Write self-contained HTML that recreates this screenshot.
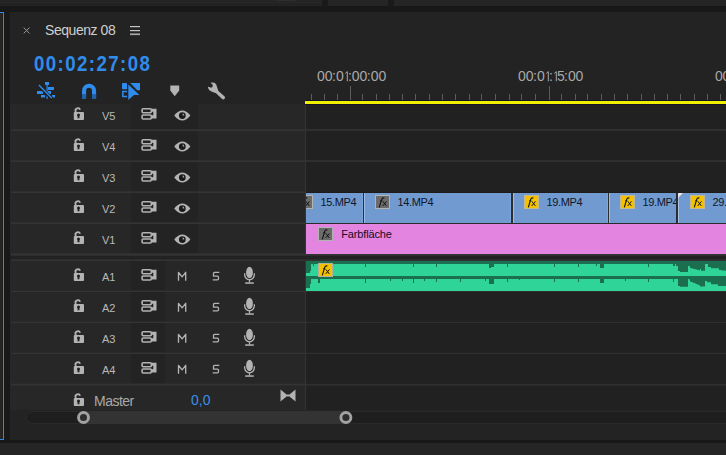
<!DOCTYPE html><html><head><meta charset="utf-8"><style>
html,body{margin:0;padding:0;}
body{width:726px;height:455px;overflow:hidden;position:relative;background:#242424;font-family:"Liberation Sans", sans-serif;}
.r{position:absolute;}
.t{position:absolute;white-space:nowrap;line-height:1;}
svg{position:absolute;overflow:visible;}
</style></head><body>
<div class="r" style="left:0px;top:0px;width:726px;height:6px;background:#1a1a1a;"></div>
<div class="r" style="left:0px;top:0px;width:322px;height:6px;background:#252525;"></div>
<div class="r" style="left:0px;top:4px;width:321px;height:1px;background:#202020;"></div>
<div class="r" style="left:278px;top:0px;width:17px;height:1px;background:#2e2e2e;"></div>
<div class="r" style="left:328px;top:0px;width:60px;height:6px;background:#252525;"></div>
<div class="r" style="left:394px;top:0px;width:332px;height:6px;background:#252525;"></div>
<div class="r" style="left:0px;top:6px;width:726px;height:6px;background:#181818;"></div>
<div class="r" style="left:0px;top:12px;width:10px;height:428px;background:#191919;"></div>
<div class="r" style="left:0px;top:13px;width:2px;height:426px;background:#262626;"></div>
<div class="r" style="left:2px;top:13px;width:1px;height:426px;background:#221e1a;"></div>
<div class="r" style="left:3px;top:12px;width:1px;height:428px;background:#2d8ceb;"></div>
<div class="r" style="left:0px;top:12px;width:4px;height:1px;background:#2d8ceb;"></div>
<div class="r" style="left:0px;top:439px;width:4px;height:1px;background:#2d8ceb;"></div>
<div class="r" style="left:10px;top:12px;width:716px;height:428px;background:#232323;"></div>
<div class="r" style="left:0px;top:440px;width:726px;height:3px;background:#181818;"></div>
<div class="r" style="left:0px;top:443px;width:726px;height:12px;background:#252525;"></div>
<svg style="left:23px;top:27px" width="8" height="7" viewBox="0 0 8 7"><path d="M0.7 0.6L6.5 6.4M6.5 0.6L0.7 6.4" stroke="#9a9a9a" stroke-width="1"/></svg>
<div class="t" style="left:45px;top:23px;font-size:14px;color:#cfcfcf;letter-spacing:-0.45px;">Sequenz 08</div>
<svg style="left:130px;top:24px" width="10" height="12" viewBox="0 0 10 12"><rect x="0" y="2" width="10" height="1.2" fill="#c4c4c4"/><rect x="0" y="6" width="10" height="1.2" fill="#c4c4c4"/><rect x="0" y="9.4" width="10" height="1.7" fill="#a8a8a8"/></svg>
<div class="t" style="left:34px;top:53.5px;font-size:21.5px;color:#2f8cec;font-weight:bold;letter-spacing:1.6px;transform:scaleX(0.87);transform-origin:0 0;">00:02:27:08</div>
<svg style="left:36px;top:81px" width="20" height="19" viewBox="0 0 20 19">
<rect x="9" y="1" width="4" height="3" fill="#2f8cec"/>
<rect x="10.5" y="4" width="1.2" height="14" fill="#2f8cec"/>
<rect x="12" y="6" width="6" height="3" fill="#2f8cec"/>
<rect x="1" y="10" width="6" height="3" fill="#2f8cec"/>
<rect x="12" y="10" width="3" height="3" fill="#2f8cec"/>
<rect x="5" y="14" width="4" height="2.5" fill="#2f8cec"/>
<rect x="16" y="14" width="3" height="2.5" fill="#2f8cec"/>
<path d="M2.5 4.5L16 17.5" stroke="#232323" stroke-width="3.2"/>
<path d="M2.9 4.1L15.7 17" stroke="#2f8cec" stroke-width="1.4"/>
</svg>
<svg style="left:82px;top:83px" width="15" height="16" viewBox="0 0 15 16">
<path d="M2.05 15.6V7.7A5 5 0 0 1 12.05 7.7V15.6" fill="none" stroke="#2f8cec" stroke-width="4.1"/>
<rect x="0" y="11.1" width="4.1" height="4.5" fill="#1e64ab"/>
<rect x="10" y="11.1" width="4.1" height="4.5" fill="#1e64ab"/>
</svg>
<svg style="left:121px;top:82px" width="21" height="19" viewBox="0 0 21 19">
<rect x="1" y="1" width="5" height="6.3" rx="0.8" fill="#2f8cec"/>
<path d="M6 9.6H1.8V14.4H6" fill="none" stroke="#2f8cec" stroke-width="1.5"/>
<path d="M9.3 1H19V8.2H16.2Z" fill="#2f8cec"/>
<path d="M7.3 2.6L18.4 12.9L13 13 7.3 18Z" fill="#2f8cec"/>
</svg>
<svg style="left:170px;top:85px" width="10" height="12" viewBox="0 0 10 12">
<path d="M0.3 0.6H9.2V5.5L4.75 11.2L0.3 5.5Z" fill="#b3b3b3"/>
</svg>
<svg style="left:204px;top:79px" width="24" height="24" viewBox="0 0 24 24">
<path d="M6.6 3.5L10.6 3.7Q12.6 4.9 13.2 8.4L14.4 11.9L20.7 17.6Q21.5 18.9 20.4 20.1Q19.2 21 18.1 20.1L12.1 14.3L7.4 12.6Q4.6 11.6 3.9 8.4Q4.3 7.7 5.1 7.9L7.2 8.8Q8.6 8.3 8.8 7.1L8.5 5.6Q7.4 5 6.6 3.5Z" fill="#b3b3b3"/>
</svg>
<div class="t" style="left:317.0px;top:68.8px;font-size:14px;color:#a9a9a9;">0</div>
<div class="t" style="left:324.7px;top:68.8px;font-size:14px;color:#a9a9a9;">0</div>
<div class="t" style="left:332.0px;top:68.8px;font-size:14px;color:#a9a9a9;">:</div>
<div class="t" style="left:336.0px;top:68.8px;font-size:14px;color:#a9a9a9;">0</div>
<svg style="left:345.1px;top:70.8px" width="4" height="11" viewBox="0 0 4 11"><path d="M2.3 10.3V0.6L0.3 2.4" fill="none" stroke="#a8a8a8" stroke-width="1.0"/></svg>
<div class="t" style="left:348.0px;top:68.8px;font-size:14px;color:#a9a9a9;">:</div>
<div class="t" style="left:351.7px;top:68.8px;font-size:14px;color:#a9a9a9;">0</div>
<div class="t" style="left:359.4px;top:68.8px;font-size:14px;color:#a9a9a9;">0</div>
<div class="t" style="left:366.7px;top:68.8px;font-size:14px;color:#a9a9a9;">:</div>
<div class="t" style="left:370.7px;top:68.8px;font-size:14px;color:#a9a9a9;">0</div>
<div class="t" style="left:378.4px;top:68.8px;font-size:14px;color:#a9a9a9;">0</div>
<div class="t" style="left:518.1px;top:68.8px;font-size:14px;color:#a9a9a9;">0</div>
<div class="t" style="left:525.8px;top:68.8px;font-size:14px;color:#a9a9a9;">0</div>
<div class="t" style="left:533.1px;top:68.8px;font-size:14px;color:#a9a9a9;">:</div>
<div class="t" style="left:537.1px;top:68.8px;font-size:14px;color:#a9a9a9;">0</div>
<svg style="left:546.2px;top:70.8px" width="4" height="11" viewBox="0 0 4 11"><path d="M2.3 10.3V0.6L0.3 2.4" fill="none" stroke="#a8a8a8" stroke-width="1.0"/></svg>
<div class="t" style="left:549.1px;top:68.8px;font-size:14px;color:#a9a9a9;">:</div>
<svg style="left:553.7px;top:70.8px" width="4" height="11" viewBox="0 0 4 11"><path d="M2.3 10.3V0.6L0.3 2.4" fill="none" stroke="#a8a8a8" stroke-width="1.0"/></svg>
<div class="t" style="left:557.1px;top:68.8px;font-size:14px;color:#a9a9a9;">5</div>
<div class="t" style="left:563.9px;top:68.8px;font-size:14px;color:#a9a9a9;">:</div>
<div class="t" style="left:567.9px;top:68.8px;font-size:14px;color:#a9a9a9;">0</div>
<div class="t" style="left:575.6px;top:68.8px;font-size:14px;color:#a9a9a9;">0</div>
<div class="t" style="left:714.9px;top:68.8px;font-size:14px;color:#a9a9a9;">0</div>
<div class="t" style="left:722.6px;top:68.8px;font-size:14px;color:#a9a9a9;">0</div>
<div class="r" style="left:311px;top:94px;width:1px;height:6px;background:#5c5c5c;"></div>
<div class="r" style="left:324px;top:94px;width:1px;height:6px;background:#5c5c5c;"></div>
<div class="r" style="left:337px;top:94px;width:1px;height:6px;background:#5c5c5c;"></div>
<div class="r" style="left:350px;top:86px;width:1px;height:14px;background:#5c5c5c;"></div>
<div class="r" style="left:362px;top:94px;width:1px;height:6px;background:#5c5c5c;"></div>
<div class="r" style="left:376px;top:94px;width:1px;height:6px;background:#5c5c5c;"></div>
<div class="r" style="left:389px;top:94px;width:1px;height:6px;background:#5c5c5c;"></div>
<div class="r" style="left:402px;top:94px;width:1px;height:6px;background:#5c5c5c;"></div>
<div class="r" style="left:415px;top:94px;width:1px;height:6px;background:#5c5c5c;"></div>
<div class="r" style="left:429px;top:94px;width:1px;height:6px;background:#5c5c5c;"></div>
<div class="r" style="left:442px;top:94px;width:1px;height:6px;background:#5c5c5c;"></div>
<div class="r" style="left:455px;top:94px;width:1px;height:6px;background:#5c5c5c;"></div>
<div class="r" style="left:469px;top:94px;width:1px;height:6px;background:#5c5c5c;"></div>
<div class="r" style="left:481px;top:94px;width:1px;height:6px;background:#5c5c5c;"></div>
<div class="r" style="left:495px;top:94px;width:1px;height:6px;background:#5c5c5c;"></div>
<div class="r" style="left:509px;top:94px;width:1px;height:6px;background:#5c5c5c;"></div>
<div class="r" style="left:521px;top:94px;width:1px;height:6px;background:#5c5c5c;"></div>
<div class="r" style="left:535px;top:94px;width:1px;height:6px;background:#5c5c5c;"></div>
<div class="r" style="left:549px;top:86px;width:1px;height:14px;background:#5c5c5c;"></div>
<div class="r" style="left:561px;top:94px;width:1px;height:6px;background:#5c5c5c;"></div>
<div class="r" style="left:575px;top:94px;width:1px;height:6px;background:#5c5c5c;"></div>
<div class="r" style="left:587px;top:94px;width:1px;height:6px;background:#5c5c5c;"></div>
<div class="r" style="left:601px;top:94px;width:1px;height:6px;background:#5c5c5c;"></div>
<div class="r" style="left:614px;top:94px;width:1px;height:6px;background:#5c5c5c;"></div>
<div class="r" style="left:627px;top:94px;width:1px;height:6px;background:#5c5c5c;"></div>
<div class="r" style="left:641px;top:94px;width:1px;height:6px;background:#5c5c5c;"></div>
<div class="r" style="left:654px;top:94px;width:1px;height:6px;background:#5c5c5c;"></div>
<div class="r" style="left:667px;top:94px;width:1px;height:6px;background:#5c5c5c;"></div>
<div class="r" style="left:680px;top:94px;width:1px;height:6px;background:#5c5c5c;"></div>
<div class="r" style="left:694px;top:94px;width:1px;height:6px;background:#5c5c5c;"></div>
<div class="r" style="left:707px;top:94px;width:1px;height:6px;background:#5c5c5c;"></div>
<div class="r" style="left:720px;top:94px;width:1px;height:6px;background:#5c5c5c;"></div>
<div class="r" style="left:305px;top:100px;width:421px;height:5px;background:#15152a;"></div>
<div class="r" style="left:305px;top:101px;width:421px;height:3px;background:#f0ef00;"></div>
<div class="r" style="left:306px;top:105px;width:420px;height:305px;background:#212121;"></div>
<div class="r" style="left:305px;top:105px;width:1px;height:305px;background:#343434;"></div>
<div class="r" style="left:10px;top:100px;width:295px;height:30px;background:#272727;"></div>
<div class="r" style="left:131px;top:100px;width:67px;height:30px;background:#232323;"></div>
<div class="r" style="left:11px;top:129px;width:294px;height:1px;background:#2e2e2e;"></div>
<div class="r" style="left:11px;top:130px;width:294px;height:1px;background:#343434;"></div>
<svg style="left:73px;top:105px" width="12" height="16" viewBox="0 0 12 16">
<path d="M2.6 7.6V6.3A2.3 2.3 0 0 1 7.1 4.8" fill="none" stroke="#b3b3b3" stroke-width="1.8"/>
<rect x="0.8" y="7.1" width="10.2" height="7.9" rx="0.9" fill="#b3b3b3"/>
<circle cx="5.5" cy="10.0" r="1.5" fill="#1e1e1e"/>
<path d="M4.8 10.5H6.2L6.5 13.2H4.5Z" fill="#1e1e1e"/>
</svg>
<div class="t" style="left:102px;top:111px;font-size:11px;color:#b9b9b9;">V5</div>
<svg style="left:141px;top:108px" width="17" height="13" viewBox="0 0 17 13">
<rect x="1.1" y="0.8" width="9.2" height="4" rx="1" fill="none" stroke="#b3b3b3" stroke-width="1.6"/>
<rect x="1.1" y="7" width="9.2" height="4" rx="1" fill="none" stroke="#b3b3b3" stroke-width="1.6"/>
<path d="M10.3 0.7H15.5V10.4H10.3V7.3H12.3V3.8H10.3Z" fill="#b3b3b3"/>
</svg>
<svg style="left:174px;top:110px" width="17" height="12" viewBox="0 0 17 12">
<path d="M0.2 5.6Q8.3 -4.4 16.4 5.6Q8.3 15.6 0.2 5.6Z" fill="#b3b3b3"/>
<circle cx="8.3" cy="5.6" r="3.4" fill="#1a1a1a"/>
<path d="M8.7 3.3V5.5H10.4Q10.2 3.7 8.7 3.3Z" fill="#a8a8a8"/>
</svg>
<div class="r" style="left:306px;top:129px;width:420px;height:2px;background:#2f2f2f;"></div>
<div class="r" style="left:10px;top:131px;width:295px;height:30px;background:#272727;"></div>
<div class="r" style="left:131px;top:131px;width:67px;height:30px;background:#232323;"></div>
<div class="r" style="left:11px;top:160px;width:294px;height:1px;background:#2e2e2e;"></div>
<div class="r" style="left:11px;top:161px;width:294px;height:1px;background:#343434;"></div>
<svg style="left:73px;top:136px" width="12" height="16" viewBox="0 0 12 16">
<path d="M2.6 7.6V6.3A2.3 2.3 0 0 1 7.1 4.8" fill="none" stroke="#b3b3b3" stroke-width="1.8"/>
<rect x="0.8" y="7.1" width="10.2" height="7.9" rx="0.9" fill="#b3b3b3"/>
<circle cx="5.5" cy="10.0" r="1.5" fill="#1e1e1e"/>
<path d="M4.8 10.5H6.2L6.5 13.2H4.5Z" fill="#1e1e1e"/>
</svg>
<div class="t" style="left:102px;top:142px;font-size:11px;color:#b9b9b9;">V4</div>
<svg style="left:141px;top:139px" width="17" height="13" viewBox="0 0 17 13">
<rect x="1.1" y="0.8" width="9.2" height="4" rx="1" fill="none" stroke="#b3b3b3" stroke-width="1.6"/>
<rect x="1.1" y="7" width="9.2" height="4" rx="1" fill="none" stroke="#b3b3b3" stroke-width="1.6"/>
<path d="M10.3 0.7H15.5V10.4H10.3V7.3H12.3V3.8H10.3Z" fill="#b3b3b3"/>
</svg>
<svg style="left:174px;top:141px" width="17" height="12" viewBox="0 0 17 12">
<path d="M0.2 5.6Q8.3 -4.4 16.4 5.6Q8.3 15.6 0.2 5.6Z" fill="#b3b3b3"/>
<circle cx="8.3" cy="5.6" r="3.4" fill="#1a1a1a"/>
<path d="M8.7 3.3V5.5H10.4Q10.2 3.7 8.7 3.3Z" fill="#a8a8a8"/>
</svg>
<div class="r" style="left:306px;top:160px;width:420px;height:2px;background:#2f2f2f;"></div>
<div class="r" style="left:10px;top:162px;width:295px;height:30px;background:#272727;"></div>
<div class="r" style="left:131px;top:162px;width:67px;height:30px;background:#232323;"></div>
<div class="r" style="left:11px;top:191px;width:294px;height:1px;background:#2e2e2e;"></div>
<div class="r" style="left:11px;top:192px;width:294px;height:1px;background:#343434;"></div>
<svg style="left:73px;top:167px" width="12" height="16" viewBox="0 0 12 16">
<path d="M2.6 7.6V6.3A2.3 2.3 0 0 1 7.1 4.8" fill="none" stroke="#b3b3b3" stroke-width="1.8"/>
<rect x="0.8" y="7.1" width="10.2" height="7.9" rx="0.9" fill="#b3b3b3"/>
<circle cx="5.5" cy="10.0" r="1.5" fill="#1e1e1e"/>
<path d="M4.8 10.5H6.2L6.5 13.2H4.5Z" fill="#1e1e1e"/>
</svg>
<div class="t" style="left:102px;top:173px;font-size:11px;color:#b9b9b9;">V3</div>
<svg style="left:141px;top:170px" width="17" height="13" viewBox="0 0 17 13">
<rect x="1.1" y="0.8" width="9.2" height="4" rx="1" fill="none" stroke="#b3b3b3" stroke-width="1.6"/>
<rect x="1.1" y="7" width="9.2" height="4" rx="1" fill="none" stroke="#b3b3b3" stroke-width="1.6"/>
<path d="M10.3 0.7H15.5V10.4H10.3V7.3H12.3V3.8H10.3Z" fill="#b3b3b3"/>
</svg>
<svg style="left:174px;top:172px" width="17" height="12" viewBox="0 0 17 12">
<path d="M0.2 5.6Q8.3 -4.4 16.4 5.6Q8.3 15.6 0.2 5.6Z" fill="#b3b3b3"/>
<circle cx="8.3" cy="5.6" r="3.4" fill="#1a1a1a"/>
<path d="M8.7 3.3V5.5H10.4Q10.2 3.7 8.7 3.3Z" fill="#a8a8a8"/>
</svg>
<div class="r" style="left:306px;top:191px;width:420px;height:2px;background:#2f2f2f;"></div>
<div class="r" style="left:10px;top:193px;width:295px;height:30px;background:#272727;"></div>
<div class="r" style="left:131px;top:193px;width:67px;height:30px;background:#232323;"></div>
<div class="r" style="left:11px;top:222px;width:294px;height:1px;background:#2e2e2e;"></div>
<div class="r" style="left:11px;top:223px;width:294px;height:1px;background:#343434;"></div>
<svg style="left:73px;top:198px" width="12" height="16" viewBox="0 0 12 16">
<path d="M2.6 7.6V6.3A2.3 2.3 0 0 1 7.1 4.8" fill="none" stroke="#b3b3b3" stroke-width="1.8"/>
<rect x="0.8" y="7.1" width="10.2" height="7.9" rx="0.9" fill="#b3b3b3"/>
<circle cx="5.5" cy="10.0" r="1.5" fill="#1e1e1e"/>
<path d="M4.8 10.5H6.2L6.5 13.2H4.5Z" fill="#1e1e1e"/>
</svg>
<div class="t" style="left:102px;top:204px;font-size:11px;color:#b9b9b9;">V2</div>
<svg style="left:141px;top:201px" width="17" height="13" viewBox="0 0 17 13">
<rect x="1.1" y="0.8" width="9.2" height="4" rx="1" fill="none" stroke="#b3b3b3" stroke-width="1.6"/>
<rect x="1.1" y="7" width="9.2" height="4" rx="1" fill="none" stroke="#b3b3b3" stroke-width="1.6"/>
<path d="M10.3 0.7H15.5V10.4H10.3V7.3H12.3V3.8H10.3Z" fill="#b3b3b3"/>
</svg>
<svg style="left:174px;top:203px" width="17" height="12" viewBox="0 0 17 12">
<path d="M0.2 5.6Q8.3 -4.4 16.4 5.6Q8.3 15.6 0.2 5.6Z" fill="#b3b3b3"/>
<circle cx="8.3" cy="5.6" r="3.4" fill="#1a1a1a"/>
<path d="M8.7 3.3V5.5H10.4Q10.2 3.7 8.7 3.3Z" fill="#a8a8a8"/>
</svg>
<div class="r" style="left:306px;top:222px;width:420px;height:2px;background:#2f2f2f;"></div>
<div class="r" style="left:10px;top:224px;width:295px;height:30px;background:#272727;"></div>
<div class="r" style="left:131px;top:224px;width:67px;height:30px;background:#232323;"></div>
<div class="r" style="left:11px;top:253px;width:294px;height:1px;background:#2e2e2e;"></div>
<div class="r" style="left:11px;top:254px;width:294px;height:1px;background:#343434;"></div>
<svg style="left:73px;top:229px" width="12" height="16" viewBox="0 0 12 16">
<path d="M2.6 7.6V6.3A2.3 2.3 0 0 1 7.1 4.8" fill="none" stroke="#b3b3b3" stroke-width="1.8"/>
<rect x="0.8" y="7.1" width="10.2" height="7.9" rx="0.9" fill="#b3b3b3"/>
<circle cx="5.5" cy="10.0" r="1.5" fill="#1e1e1e"/>
<path d="M4.8 10.5H6.2L6.5 13.2H4.5Z" fill="#1e1e1e"/>
</svg>
<div class="t" style="left:102px;top:235px;font-size:11px;color:#b9b9b9;">V1</div>
<svg style="left:141px;top:232px" width="17" height="13" viewBox="0 0 17 13">
<rect x="1.1" y="0.8" width="9.2" height="4" rx="1" fill="none" stroke="#b3b3b3" stroke-width="1.6"/>
<rect x="1.1" y="7" width="9.2" height="4" rx="1" fill="none" stroke="#b3b3b3" stroke-width="1.6"/>
<path d="M10.3 0.7H15.5V10.4H10.3V7.3H12.3V3.8H10.3Z" fill="#b3b3b3"/>
</svg>
<svg style="left:174px;top:234px" width="17" height="12" viewBox="0 0 17 12">
<path d="M0.2 5.6Q8.3 -4.4 16.4 5.6Q8.3 15.6 0.2 5.6Z" fill="#b3b3b3"/>
<circle cx="8.3" cy="5.6" r="3.4" fill="#1a1a1a"/>
<path d="M8.7 3.3V5.5H10.4Q10.2 3.7 8.7 3.3Z" fill="#a8a8a8"/>
</svg>
<div class="r" style="left:306px;top:253px;width:420px;height:2px;background:#2f2f2f;"></div>
<div class="r" style="left:10px;top:100px;width:295px;height:4px;background:#232323;"></div>
<div class="r" style="left:306px;top:191px;width:420px;height:1px;background:#212121;"></div>
<div class="r" style="left:306px;top:192px;width:420px;height:1px;background:#1e1c1a;"></div>
<div class="r" style="left:10px;top:255px;width:716px;height:6px;background:#222222;"></div>
<div class="r" style="left:11px;top:254px;width:715px;height:1px;background:#333333;"></div>
<div class="r" style="left:11px;top:255px;width:715px;height:1px;background:#2e2e2e;"></div>
<div class="r" style="left:11px;top:259px;width:715px;height:1px;background:#2c2c2c;"></div>
<div class="r" style="left:11px;top:260px;width:715px;height:1px;background:#333333;"></div>
<div class="r" style="left:10px;top:261px;width:295px;height:30px;background:#272727;"></div>
<div class="r" style="left:131px;top:261px;width:34px;height:30px;background:#232323;"></div>
<div class="r" style="left:11px;top:290px;width:294px;height:1px;background:#2e2e2e;"></div>
<div class="r" style="left:11px;top:291px;width:294px;height:1px;background:#343434;"></div>
<svg style="left:73px;top:266px" width="12" height="16" viewBox="0 0 12 16">
<path d="M2.6 7.6V6.3A2.3 2.3 0 0 1 7.1 4.8" fill="none" stroke="#b3b3b3" stroke-width="1.8"/>
<rect x="0.8" y="7.1" width="10.2" height="7.9" rx="0.9" fill="#b3b3b3"/>
<circle cx="5.5" cy="10.0" r="1.5" fill="#1e1e1e"/>
<path d="M4.8 10.5H6.2L6.5 13.2H4.5Z" fill="#1e1e1e"/>
</svg>
<div class="t" style="left:102px;top:272px;font-size:11px;color:#b9b9b9;">A1</div>
<svg style="left:141px;top:269px" width="17" height="13" viewBox="0 0 17 13">
<rect x="1.1" y="0.8" width="9.2" height="4" rx="1" fill="none" stroke="#b3b3b3" stroke-width="1.6"/>
<rect x="1.1" y="7" width="9.2" height="4" rx="1" fill="none" stroke="#b3b3b3" stroke-width="1.6"/>
<path d="M10.3 0.7H15.5V10.4H10.3V7.3H12.3V3.8H10.3Z" fill="#b3b3b3"/>
</svg>
<div class="r" style="left:11px;top:290px;width:294px;height:1px;background:#2a2a2a;"></div>
<div class="r" style="left:306px;top:290px;width:420px;height:1px;background:#232323;"></div>
<div class="r" style="left:306px;top:291px;width:420px;height:1px;background:#2f2f2f;"></div>
<svg style="left:177px;top:271px" width="11" height="11" viewBox="0 0 11 11">
<path d="M1.5 9.7V1.3L5.1 5.9L8.7 1.3V9.7" fill="none" stroke="#b3b3b3" stroke-width="1.35" stroke-linejoin="round"/>
</svg>
<svg style="left:212px;top:271px" width="8" height="11" viewBox="0 0 8 11">
<path d="M7.3 1.4H2.6Q1.5 1.4 1.5 2.5V5.2H5.4Q6.5 5.2 6.5 6.3V7.8Q6.5 8.9 5.4 8.9H0.7" fill="none" stroke="#b3b3b3" stroke-width="1.25"/>
</svg>
<svg style="left:244px;top:266px" width="12" height="19" viewBox="0 0 12 19">
<ellipse cx="5.5" cy="6.5" rx="3.4" ry="5.8" fill="#b3b3b3"/>
<path d="M0.65 7.2V8.4A4.85 5.4 0 0 0 10.35 8.4V7.2" fill="none" stroke="#b3b3b3" stroke-width="1.3"/>
<rect x="4.9" y="13.4" width="1.2" height="3.2" fill="#b3b3b3"/>
<rect x="1.2" y="16.3" width="8.6" height="1.5" fill="#b3b3b3"/>
</svg>
<div class="r" style="left:10px;top:292px;width:295px;height:30px;background:#272727;"></div>
<div class="r" style="left:131px;top:292px;width:34px;height:30px;background:#232323;"></div>
<div class="r" style="left:11px;top:321px;width:294px;height:1px;background:#2e2e2e;"></div>
<div class="r" style="left:11px;top:322px;width:294px;height:1px;background:#343434;"></div>
<svg style="left:73px;top:297px" width="12" height="16" viewBox="0 0 12 16">
<path d="M2.6 7.6V6.3A2.3 2.3 0 0 1 7.1 4.8" fill="none" stroke="#b3b3b3" stroke-width="1.8"/>
<rect x="0.8" y="7.1" width="10.2" height="7.9" rx="0.9" fill="#b3b3b3"/>
<circle cx="5.5" cy="10.0" r="1.5" fill="#1e1e1e"/>
<path d="M4.8 10.5H6.2L6.5 13.2H4.5Z" fill="#1e1e1e"/>
</svg>
<div class="t" style="left:102px;top:303px;font-size:11px;color:#b9b9b9;">A2</div>
<svg style="left:141px;top:300px" width="17" height="13" viewBox="0 0 17 13">
<rect x="1.1" y="0.8" width="9.2" height="4" rx="1" fill="none" stroke="#b3b3b3" stroke-width="1.6"/>
<rect x="1.1" y="7" width="9.2" height="4" rx="1" fill="none" stroke="#b3b3b3" stroke-width="1.6"/>
<path d="M10.3 0.7H15.5V10.4H10.3V7.3H12.3V3.8H10.3Z" fill="#b3b3b3"/>
</svg>
<div class="r" style="left:11px;top:321px;width:294px;height:1px;background:#2a2a2a;"></div>
<div class="r" style="left:306px;top:321px;width:420px;height:1px;background:#232323;"></div>
<div class="r" style="left:306px;top:322px;width:420px;height:1px;background:#2f2f2f;"></div>
<svg style="left:177px;top:302px" width="11" height="11" viewBox="0 0 11 11">
<path d="M1.5 9.7V1.3L5.1 5.9L8.7 1.3V9.7" fill="none" stroke="#b3b3b3" stroke-width="1.35" stroke-linejoin="round"/>
</svg>
<svg style="left:212px;top:302px" width="8" height="11" viewBox="0 0 8 11">
<path d="M7.3 1.4H2.6Q1.5 1.4 1.5 2.5V5.2H5.4Q6.5 5.2 6.5 6.3V7.8Q6.5 8.9 5.4 8.9H0.7" fill="none" stroke="#b3b3b3" stroke-width="1.25"/>
</svg>
<svg style="left:244px;top:297px" width="12" height="19" viewBox="0 0 12 19">
<ellipse cx="5.5" cy="6.5" rx="3.4" ry="5.8" fill="#b3b3b3"/>
<path d="M0.65 7.2V8.4A4.85 5.4 0 0 0 10.35 8.4V7.2" fill="none" stroke="#b3b3b3" stroke-width="1.3"/>
<rect x="4.9" y="13.4" width="1.2" height="3.2" fill="#b3b3b3"/>
<rect x="1.2" y="16.3" width="8.6" height="1.5" fill="#b3b3b3"/>
</svg>
<div class="r" style="left:10px;top:323px;width:295px;height:30px;background:#272727;"></div>
<div class="r" style="left:131px;top:323px;width:34px;height:30px;background:#232323;"></div>
<div class="r" style="left:11px;top:352px;width:294px;height:1px;background:#2e2e2e;"></div>
<div class="r" style="left:11px;top:353px;width:294px;height:1px;background:#343434;"></div>
<svg style="left:73px;top:328px" width="12" height="16" viewBox="0 0 12 16">
<path d="M2.6 7.6V6.3A2.3 2.3 0 0 1 7.1 4.8" fill="none" stroke="#b3b3b3" stroke-width="1.8"/>
<rect x="0.8" y="7.1" width="10.2" height="7.9" rx="0.9" fill="#b3b3b3"/>
<circle cx="5.5" cy="10.0" r="1.5" fill="#1e1e1e"/>
<path d="M4.8 10.5H6.2L6.5 13.2H4.5Z" fill="#1e1e1e"/>
</svg>
<div class="t" style="left:102px;top:334px;font-size:11px;color:#b9b9b9;">A3</div>
<svg style="left:141px;top:331px" width="17" height="13" viewBox="0 0 17 13">
<rect x="1.1" y="0.8" width="9.2" height="4" rx="1" fill="none" stroke="#b3b3b3" stroke-width="1.6"/>
<rect x="1.1" y="7" width="9.2" height="4" rx="1" fill="none" stroke="#b3b3b3" stroke-width="1.6"/>
<path d="M10.3 0.7H15.5V10.4H10.3V7.3H12.3V3.8H10.3Z" fill="#b3b3b3"/>
</svg>
<div class="r" style="left:11px;top:352px;width:294px;height:1px;background:#2a2a2a;"></div>
<div class="r" style="left:306px;top:352px;width:420px;height:1px;background:#232323;"></div>
<div class="r" style="left:306px;top:353px;width:420px;height:1px;background:#2f2f2f;"></div>
<svg style="left:177px;top:333px" width="11" height="11" viewBox="0 0 11 11">
<path d="M1.5 9.7V1.3L5.1 5.9L8.7 1.3V9.7" fill="none" stroke="#b3b3b3" stroke-width="1.35" stroke-linejoin="round"/>
</svg>
<svg style="left:212px;top:333px" width="8" height="11" viewBox="0 0 8 11">
<path d="M7.3 1.4H2.6Q1.5 1.4 1.5 2.5V5.2H5.4Q6.5 5.2 6.5 6.3V7.8Q6.5 8.9 5.4 8.9H0.7" fill="none" stroke="#b3b3b3" stroke-width="1.25"/>
</svg>
<svg style="left:244px;top:328px" width="12" height="19" viewBox="0 0 12 19">
<ellipse cx="5.5" cy="6.5" rx="3.4" ry="5.8" fill="#b3b3b3"/>
<path d="M0.65 7.2V8.4A4.85 5.4 0 0 0 10.35 8.4V7.2" fill="none" stroke="#b3b3b3" stroke-width="1.3"/>
<rect x="4.9" y="13.4" width="1.2" height="3.2" fill="#b3b3b3"/>
<rect x="1.2" y="16.3" width="8.6" height="1.5" fill="#b3b3b3"/>
</svg>
<div class="r" style="left:10px;top:354px;width:295px;height:30px;background:#272727;"></div>
<div class="r" style="left:131px;top:354px;width:34px;height:30px;background:#232323;"></div>
<div class="r" style="left:11px;top:383px;width:294px;height:1px;background:#2e2e2e;"></div>
<div class="r" style="left:11px;top:384px;width:294px;height:1px;background:#343434;"></div>
<svg style="left:73px;top:359px" width="12" height="16" viewBox="0 0 12 16">
<path d="M2.6 7.6V6.3A2.3 2.3 0 0 1 7.1 4.8" fill="none" stroke="#b3b3b3" stroke-width="1.8"/>
<rect x="0.8" y="7.1" width="10.2" height="7.9" rx="0.9" fill="#b3b3b3"/>
<circle cx="5.5" cy="10.0" r="1.5" fill="#1e1e1e"/>
<path d="M4.8 10.5H6.2L6.5 13.2H4.5Z" fill="#1e1e1e"/>
</svg>
<div class="t" style="left:102px;top:365px;font-size:11px;color:#b9b9b9;">A4</div>
<svg style="left:141px;top:362px" width="17" height="13" viewBox="0 0 17 13">
<rect x="1.1" y="0.8" width="9.2" height="4" rx="1" fill="none" stroke="#b3b3b3" stroke-width="1.6"/>
<rect x="1.1" y="7" width="9.2" height="4" rx="1" fill="none" stroke="#b3b3b3" stroke-width="1.6"/>
<path d="M10.3 0.7H15.5V10.4H10.3V7.3H12.3V3.8H10.3Z" fill="#b3b3b3"/>
</svg>
<div class="r" style="left:11px;top:383px;width:294px;height:1px;background:#2a2a2a;"></div>
<div class="r" style="left:306px;top:383px;width:420px;height:1px;background:#232323;"></div>
<div class="r" style="left:306px;top:384px;width:420px;height:1px;background:#2f2f2f;"></div>
<svg style="left:177px;top:364px" width="11" height="11" viewBox="0 0 11 11">
<path d="M1.5 9.7V1.3L5.1 5.9L8.7 1.3V9.7" fill="none" stroke="#b3b3b3" stroke-width="1.35" stroke-linejoin="round"/>
</svg>
<svg style="left:212px;top:364px" width="8" height="11" viewBox="0 0 8 11">
<path d="M7.3 1.4H2.6Q1.5 1.4 1.5 2.5V5.2H5.4Q6.5 5.2 6.5 6.3V7.8Q6.5 8.9 5.4 8.9H0.7" fill="none" stroke="#b3b3b3" stroke-width="1.25"/>
</svg>
<svg style="left:244px;top:359px" width="12" height="19" viewBox="0 0 12 19">
<ellipse cx="5.5" cy="6.5" rx="3.4" ry="5.8" fill="#b3b3b3"/>
<path d="M0.65 7.2V8.4A4.85 5.4 0 0 0 10.35 8.4V7.2" fill="none" stroke="#b3b3b3" stroke-width="1.3"/>
<rect x="4.9" y="13.4" width="1.2" height="3.2" fill="#b3b3b3"/>
<rect x="1.2" y="16.3" width="8.6" height="1.5" fill="#b3b3b3"/>
</svg>
<div class="r" style="left:10px;top:385px;width:295px;height:25px;background:#272727;"></div>
<div class="r" style="left:11px;top:385px;width:294px;height:1px;background:#2c2c2c;"></div>
<div class="r" style="left:306px;top:385px;width:420px;height:1px;background:#2a2a2a;"></div>
<svg style="left:73px;top:391px" width="12" height="16" viewBox="0 0 12 16">
<path d="M2.6 7.6V6.3A2.3 2.3 0 0 1 7.1 4.8" fill="none" stroke="#b3b3b3" stroke-width="1.8"/>
<rect x="0.8" y="7.1" width="10.2" height="7.9" rx="0.9" fill="#b3b3b3"/>
<circle cx="5.5" cy="10.0" r="1.5" fill="#1e1e1e"/>
<path d="M4.8 10.5H6.2L6.5 13.2H4.5Z" fill="#1e1e1e"/>
</svg>
<div class="t" style="left:94px;top:394px;font-size:14px;color:#a9a9a9;letter-spacing:-0.5px;">Master</div>
<div class="t" style="left:191px;top:393px;font-size:14px;color:#3a8ee8;">0,0</div>
<svg style="left:280px;top:389px" width="16" height="13" viewBox="0 0 16 13">
<path d="M0.5 0.5L6 5V8L0.5 12.5Z M15.5 0.5L10 5V8L15.5 12.5Z" fill="#b3b3b3"/>
<rect x="6" y="5.5" width="4" height="2" fill="#b3b3b3"/>
</svg>
<div class="r" style="left:26px;top:411px;width:700px;height:13px;background:#1e1e1e;border-radius:7px 0 0 7px;box-sizing:border-box;border:1px solid #2a2a2a;border-right:none;"></div>
<div class="r" style="left:84px;top:411px;width:262px;height:13px;background:#333333;"></div>
<svg style="left:77px;top:411px" width="14" height="14" viewBox="0 0 14 14"><circle cx="6.5" cy="6.5" r="5.0" fill="#2e2e2e" stroke="#a2a2a2" stroke-width="2.9"/></svg>
<svg style="left:339px;top:411px" width="14" height="14" viewBox="0 0 14 14"><circle cx="6.9" cy="6.5" r="5.0" fill="#2e2e2e" stroke="#a2a2a2" stroke-width="2.9"/></svg>
<div class="r" style="left:306px;top:193px;width:420px;height:30px;overflow:hidden;">
<div class="r" style="left:0px;top:0px;width:420px;height:30px;background:#719bd0;"></div>
<svg style="left:-8px;top:2px" width="15" height="14" viewBox="0 0 15 14">
<rect x="0.5" y="0.5" width="14" height="13" fill="#6b6b6b" stroke="#b4b4ae" stroke-width="1"/>
<path d="M9.4 3.0Q7.4 2.4 6.7 4.4L4.3 12.4" stroke="#111" stroke-width="1.1" fill="none"/>
<path d="M5.0 5.8H7.4" stroke="#111" stroke-width="0.8"/>
<path d="M7.9 6.4L11.3 10.9M11.5 6.4L7.7 10.9" stroke="#111" stroke-width="1.0"/>
</svg>
<div class="t" style="left:14.600000000000023px;top:4px;font-size:11px;color:#10152a;letter-spacing:-0.4px;">15.MP4</div>
<svg style="left:69px;top:2px" width="15" height="14" viewBox="0 0 15 14">
<rect x="0.5" y="0.5" width="14" height="13" fill="#6b6b6b" stroke="#b4b4ae" stroke-width="1"/>
<path d="M9.4 3.0Q7.4 2.4 6.7 4.4L4.3 12.4" stroke="#111" stroke-width="1.1" fill="none"/>
<path d="M5.0 5.8H7.4" stroke="#111" stroke-width="0.8"/>
<path d="M7.9 6.4L11.3 10.9M11.5 6.4L7.7 10.9" stroke="#111" stroke-width="1.0"/>
</svg>
<div class="t" style="left:91.60000000000002px;top:4px;font-size:11px;color:#10152a;letter-spacing:-0.4px;">14.MP4</div>
<svg style="left:218px;top:2px" width="15" height="14" viewBox="0 0 15 14">
<rect x="0.5" y="0.5" width="14" height="13" fill="#f2c200" stroke="#c3b88f" stroke-width="1"/>
<path d="M9.4 3.0Q7.4 2.4 6.7 4.4L4.3 12.4" stroke="#111" stroke-width="1.1" fill="none"/>
<path d="M5.0 5.8H7.4" stroke="#111" stroke-width="0.8"/>
<path d="M7.9 6.4L11.3 10.9M11.5 6.4L7.7 10.9" stroke="#111" stroke-width="1.0"/>
</svg>
<div class="t" style="left:240.60000000000002px;top:4px;font-size:11px;color:#10152a;letter-spacing:-0.4px;">19.MP4</div>
<svg style="left:314px;top:2px" width="15" height="14" viewBox="0 0 15 14">
<rect x="0.5" y="0.5" width="14" height="13" fill="#f2c200" stroke="#c3b88f" stroke-width="1"/>
<path d="M9.4 3.0Q7.4 2.4 6.7 4.4L4.3 12.4" stroke="#111" stroke-width="1.1" fill="none"/>
<path d="M5.0 5.8H7.4" stroke="#111" stroke-width="0.8"/>
<path d="M7.9 6.4L11.3 10.9M11.5 6.4L7.7 10.9" stroke="#111" stroke-width="1.0"/>
</svg>
<div class="t" style="left:336.6px;top:4px;font-size:11px;color:#10152a;letter-spacing:-0.4px;">19.MP4</div>
<svg style="left:384px;top:2px" width="15" height="14" viewBox="0 0 15 14">
<rect x="0.5" y="0.5" width="14" height="13" fill="#f2c200" stroke="#c3b88f" stroke-width="1"/>
<path d="M9.4 3.0Q7.4 2.4 6.7 4.4L4.3 12.4" stroke="#111" stroke-width="1.1" fill="none"/>
<path d="M5.0 5.8H7.4" stroke="#111" stroke-width="0.8"/>
<path d="M7.9 6.4L11.3 10.9M11.5 6.4L7.7 10.9" stroke="#111" stroke-width="1.0"/>
</svg>
<div class="t" style="left:406.6px;top:4px;font-size:11px;color:#10152a;letter-spacing:-0.4px;">29.MP4</div>
<div class="r" style="left:56px;top:0px;width:1px;height:30px;background:#7aa6dc;"></div>
<div class="r" style="left:57px;top:0px;width:1px;height:30px;background:#2e2e2e;"></div>
<div class="r" style="left:58px;top:0px;width:1px;height:30px;background:#9cbbe3;"></div>
<div class="r" style="left:204px;top:0px;width:1px;height:30px;background:#7aa6dc;"></div>
<div class="r" style="left:205px;top:0px;width:2px;height:30px;background:#2e2e2e;"></div>
<div class="r" style="left:207px;top:0px;width:1px;height:30px;background:#9cbbe3;"></div>
<div class="r" style="left:301px;top:0px;width:1px;height:30px;background:#7aa6dc;"></div>
<div class="r" style="left:302px;top:0px;width:1px;height:30px;background:#2e2e2e;"></div>
<div class="r" style="left:303px;top:0px;width:1px;height:30px;background:#9cbbe3;"></div>
<div class="r" style="left:370px;top:0px;width:2px;height:30px;background:#2a2d33;"></div>
<div class="r" style="left:372px;top:0px;width:1px;height:30px;background:#a8c2e6;"></div>
<svg style="left:372px;top:0px" width="6" height="6" viewBox="0 0 6 6"><path d="M0 0H5L0 5Z" fill="#e8e8e8"/></svg>
</div>
<div class="r" style="left:306px;top:223px;width:420px;height:1px;background:#2a2a2a;"></div>
<div class="r" style="left:306px;top:224px;width:420px;height:30px;background:#e384e0;"></div>
<svg style="left:318px;top:227px" width="15" height="14" viewBox="0 0 15 14">
<rect x="0.5" y="0.5" width="14" height="13" fill="#6b6b6b" stroke="#b2b2b2" stroke-width="1"/>
<path d="M9.4 3.0Q7.4 2.4 6.7 4.4L4.3 12.4" stroke="#111" stroke-width="1.1" fill="none"/>
<path d="M5.0 5.8H7.4" stroke="#111" stroke-width="0.8"/>
<path d="M7.9 6.4L11.3 10.9M11.5 6.4L7.7 10.9" stroke="#111" stroke-width="1.0"/>
</svg>
<div class="t" style="left:341.3px;top:228.5px;font-size:11px;color:#180a28;letter-spacing:-0.15px;">Farbfläche</div>
<div class="r" style="left:306px;top:261px;width:420px;height:30px;background:#1b6e50;"></div>
<svg style="left:0;top:0" width="726" height="455" viewBox="0 0 726 455"><path d="M306 276 L306 273.0 L307 273.0 L307 273.0 L308 273.0 L308 273.0 L309 273.0 L309 273.0 L310 273.0 L310 271.0 L311 271.0 L311 264.0 L312 264.0 L312 264.0 L313 264.0 L313 266.0 L314 266.0 L314 264.0 L315 264.0 L315 264.0 L316 264.0 L316 264.0 L317 264.0 L317 264.0 L318 264.0 L318 264.0 L319 264.0 L319 264.0 L320 264.0 L320 264.0 L321 264.0 L321 264.0 L322 264.0 L322 264.0 L323 264.0 L323 264.0 L324 264.0 L324 264.0 L325 264.0 L325 264.0 L326 264.0 L326 264.0 L327 264.0 L327 264.0 L328 264.0 L328 264.0 L329 264.0 L329 264.0 L330 264.0 L330 264.0 L331 264.0 L331 264.0 L332 264.0 L332 264.0 L333 264.0 L333 264.0 L334 264.0 L334 264.0 L335 264.0 L335 264.0 L336 264.0 L336 264.0 L337 264.0 L337 264.0 L338 264.0 L338 264.0 L339 264.0 L339 264.0 L340 264.0 L340 264.0 L341 264.0 L341 264.0 L342 264.0 L342 264.0 L343 264.0 L343 264.0 L344 264.0 L344 264.0 L345 264.0 L345 264.0 L346 264.0 L346 264.0 L347 264.0 L347 264.0 L348 264.0 L348 264.0 L349 264.0 L349 264.0 L350 264.0 L350 264.0 L351 264.0 L351 264.0 L352 264.0 L352 264.0 L353 264.0 L353 264.0 L354 264.0 L354 264.0 L355 264.0 L355 264.0 L356 264.0 L356 264.0 L357 264.0 L357 264.0 L358 264.0 L358 264.0 L359 264.0 L359 264.0 L360 264.0 L360 264.0 L361 264.0 L361 264.0 L362 264.0 L362 264.0 L363 264.0 L363 264.0 L364 264.0 L364 264.0 L365 264.0 L365 267.0 L366 267.0 L366 264.0 L367 264.0 L367 264.0 L368 264.0 L368 264.0 L369 264.0 L369 264.0 L370 264.0 L370 264.0 L371 264.0 L371 264.0 L372 264.0 L372 264.0 L373 264.0 L373 264.0 L374 264.0 L374 264.0 L375 264.0 L375 264.0 L376 264.0 L376 264.0 L377 264.0 L377 264.0 L378 264.0 L378 264.0 L379 264.0 L379 264.0 L380 264.0 L380 264.0 L381 264.0 L381 264.0 L382 264.0 L382 264.0 L383 264.0 L383 264.0 L384 264.0 L384 264.0 L385 264.0 L385 264.0 L386 264.0 L386 264.0 L387 264.0 L387 264.0 L388 264.0 L388 264.0 L389 264.0 L389 264.0 L390 264.0 L390 264.0 L391 264.0 L391 264.0 L392 264.0 L392 264.0 L393 264.0 L393 264.0 L394 264.0 L394 264.0 L395 264.0 L395 264.0 L396 264.0 L396 264.0 L397 264.0 L397 264.0 L398 264.0 L398 264.0 L399 264.0 L399 264.0 L400 264.0 L400 264.0 L401 264.0 L401 264.0 L402 264.0 L402 264.0 L403 264.0 L403 264.0 L404 264.0 L404 264.0 L405 264.0 L405 264.0 L406 264.0 L406 264.0 L407 264.0 L407 264.0 L408 264.0 L408 264.0 L409 264.0 L409 264.0 L410 264.0 L410 264.0 L411 264.0 L411 264.0 L412 264.0 L412 264.0 L413 264.0 L413 267.0 L414 267.0 L414 264.0 L415 264.0 L415 264.0 L416 264.0 L416 264.0 L417 264.0 L417 264.0 L418 264.0 L418 264.0 L419 264.0 L419 264.0 L420 264.0 L420 264.0 L421 264.0 L421 264.0 L422 264.0 L422 264.0 L423 264.0 L423 264.0 L424 264.0 L424 264.0 L425 264.0 L425 264.0 L426 264.0 L426 264.0 L427 264.0 L427 264.0 L428 264.0 L428 264.0 L429 264.0 L429 264.0 L430 264.0 L430 264.0 L431 264.0 L431 264.0 L432 264.0 L432 264.0 L433 264.0 L433 264.0 L434 264.0 L434 264.0 L435 264.0 L435 264.0 L436 264.0 L436 267.0 L437 267.0 L437 264.0 L438 264.0 L438 264.0 L439 264.0 L439 264.0 L440 264.0 L440 264.0 L441 264.0 L441 264.0 L442 264.0 L442 264.0 L443 264.0 L443 264.0 L444 264.0 L444 264.0 L445 264.0 L445 264.0 L446 264.0 L446 264.0 L447 264.0 L447 264.0 L448 264.0 L448 264.0 L449 264.0 L449 264.0 L450 264.0 L450 264.0 L451 264.0 L451 264.0 L452 264.0 L452 264.0 L453 264.0 L453 264.0 L454 264.0 L454 264.0 L455 264.0 L455 264.0 L456 264.0 L456 264.0 L457 264.0 L457 264.0 L458 264.0 L458 264.0 L459 264.0 L459 264.0 L460 264.0 L460 264.0 L461 264.0 L461 264.0 L462 264.0 L462 264.0 L463 264.0 L463 264.0 L464 264.0 L464 264.0 L465 264.0 L465 264.0 L466 264.0 L466 264.0 L467 264.0 L467 264.0 L468 264.0 L468 264.0 L469 264.0 L469 264.0 L470 264.0 L470 264.0 L471 264.0 L471 264.0 L472 264.0 L472 264.0 L473 264.0 L473 264.0 L474 264.0 L474 264.0 L475 264.0 L475 264.0 L476 264.0 L476 264.0 L477 264.0 L477 264.0 L478 264.0 L478 264.0 L479 264.0 L479 264.0 L480 264.0 L480 264.0 L481 264.0 L481 264.0 L482 264.0 L482 264.0 L483 264.0 L483 264.0 L484 264.0 L484 264.0 L485 264.0 L485 264.0 L486 264.0 L486 264.0 L487 264.0 L487 264.0 L488 264.0 L488 264.0 L489 264.0 L489 268.0 L490 268.0 L490 268.0 L491 268.0 L491 267.0 L492 267.0 L492 267.0 L493 267.0 L493 267.0 L494 267.0 L494 264.0 L495 264.0 L495 264.0 L496 264.0 L496 264.0 L497 264.0 L497 264.0 L498 264.0 L498 264.0 L499 264.0 L499 264.0 L500 264.0 L500 264.0 L501 264.0 L501 264.0 L502 264.0 L502 264.0 L503 264.0 L503 264.0 L504 264.0 L504 264.0 L505 264.0 L505 264.0 L506 264.0 L506 264.0 L507 264.0 L507 267.0 L508 267.0 L508 264.0 L509 264.0 L509 264.0 L510 264.0 L510 264.0 L511 264.0 L511 264.0 L512 264.0 L512 264.0 L513 264.0 L513 264.0 L514 264.0 L514 264.0 L515 264.0 L515 264.0 L516 264.0 L516 264.0 L517 264.0 L517 264.0 L518 264.0 L518 264.0 L519 264.0 L519 264.0 L520 264.0 L520 264.0 L521 264.0 L521 264.0 L522 264.0 L522 264.0 L523 264.0 L523 264.0 L524 264.0 L524 264.0 L525 264.0 L525 264.0 L526 264.0 L526 264.0 L527 264.0 L527 264.0 L528 264.0 L528 264.0 L529 264.0 L529 264.0 L530 264.0 L530 264.0 L531 264.0 L531 264.0 L532 264.0 L532 264.0 L533 264.0 L533 264.0 L534 264.0 L534 264.0 L535 264.0 L535 264.0 L536 264.0 L536 264.0 L537 264.0 L537 264.0 L538 264.0 L538 264.0 L539 264.0 L539 264.0 L540 264.0 L540 264.0 L541 264.0 L541 264.0 L542 264.0 L542 264.0 L543 264.0 L543 264.0 L544 264.0 L544 264.0 L545 264.0 L545 264.0 L546 264.0 L546 264.0 L547 264.0 L547 264.0 L548 264.0 L548 264.0 L549 264.0 L549 264.0 L550 264.0 L550 264.0 L551 264.0 L551 264.0 L552 264.0 L552 264.0 L553 264.0 L553 264.0 L554 264.0 L554 267.0 L555 267.0 L555 264.0 L556 264.0 L556 264.0 L557 264.0 L557 264.0 L558 264.0 L558 264.0 L559 264.0 L559 264.0 L560 264.0 L560 264.0 L561 264.0 L561 264.0 L562 264.0 L562 264.0 L563 264.0 L563 264.0 L564 264.0 L564 264.0 L565 264.0 L565 264.0 L566 264.0 L566 264.0 L567 264.0 L567 264.0 L568 264.0 L568 264.0 L569 264.0 L569 264.0 L570 264.0 L570 264.0 L571 264.0 L571 264.0 L572 264.0 L572 264.0 L573 264.0 L573 264.0 L574 264.0 L574 264.0 L575 264.0 L575 264.0 L576 264.0 L576 264.0 L577 264.0 L577 264.0 L578 264.0 L578 267.0 L579 267.0 L579 264.0 L580 264.0 L580 264.0 L581 264.0 L581 264.0 L582 264.0 L582 264.0 L583 264.0 L583 264.0 L584 264.0 L584 264.0 L585 264.0 L585 264.0 L586 264.0 L586 264.0 L587 264.0 L587 264.0 L588 264.0 L588 264.0 L589 264.0 L589 264.0 L590 264.0 L590 264.0 L591 264.0 L591 264.0 L592 264.0 L592 264.0 L593 264.0 L593 264.0 L594 264.0 L594 264.0 L595 264.0 L595 264.0 L596 264.0 L596 266.0 L597 266.0 L597 264.0 L598 264.0 L598 264.0 L599 264.0 L599 264.0 L600 264.0 L600 268.0 L601 268.0 L601 268.0 L602 268.0 L602 268.0 L603 268.0 L603 268.0 L604 268.0 L604 264.0 L605 264.0 L605 264.0 L606 264.0 L606 264.0 L607 264.0 L607 264.0 L608 264.0 L608 264.0 L609 264.0 L609 264.0 L610 264.0 L610 264.0 L611 264.0 L611 264.0 L612 264.0 L612 264.0 L613 264.0 L613 264.0 L614 264.0 L614 264.0 L615 264.0 L615 264.0 L616 264.0 L616 264.0 L617 264.0 L617 264.0 L618 264.0 L618 264.0 L619 264.0 L619 264.0 L620 264.0 L620 264.0 L621 264.0 L621 264.0 L622 264.0 L622 264.0 L623 264.0 L623 264.0 L624 264.0 L624 264.0 L625 264.0 L625 264.0 L626 264.0 L626 264.0 L627 264.0 L627 264.0 L628 264.0 L628 264.0 L629 264.0 L629 264.0 L630 264.0 L630 264.0 L631 264.0 L631 264.0 L632 264.0 L632 264.0 L633 264.0 L633 264.0 L634 264.0 L634 264.0 L635 264.0 L635 264.0 L636 264.0 L636 264.0 L637 264.0 L637 264.0 L638 264.0 L638 264.0 L639 264.0 L639 264.0 L640 264.0 L640 264.0 L641 264.0 L641 264.0 L642 264.0 L642 264.0 L643 264.0 L643 264.0 L644 264.0 L644 264.0 L645 264.0 L645 264.0 L646 264.0 L646 264.0 L647 264.0 L647 264.0 L648 264.0 L648 267.0 L649 267.0 L649 264.0 L650 264.0 L650 264.0 L651 264.0 L651 264.0 L652 264.0 L652 264.0 L653 264.0 L653 264.0 L654 264.0 L654 264.0 L655 264.0 L655 264.0 L656 264.0 L656 264.0 L657 264.0 L657 264.0 L658 264.0 L658 264.0 L659 264.0 L659 264.0 L660 264.0 L660 264.0 L661 264.0 L661 264.0 L662 264.0 L662 264.0 L663 264.0 L663 264.0 L664 264.0 L664 264.0 L665 264.0 L665 264.0 L666 264.0 L666 264.0 L667 264.0 L667 264.0 L668 264.0 L668 264.0 L669 264.0 L669 264.0 L670 264.0 L670 264.0 L671 264.0 L671 264.0 L672 264.0 L672 264.0 L673 264.0 L673 266.0 L674 266.0 L674 266.0 L675 266.0 L675 264.0 L676 264.0 L676 266.0 L677 266.0 L677 266.0 L678 266.0 L678 271.0 L679 271.0 L679 271.0 L680 271.0 L680 272.0 L681 272.0 L681 272.0 L682 272.0 L682 272.0 L683 272.0 L683 272.0 L684 272.0 L684 272.0 L685 272.0 L685 272.0 L686 272.0 L686 272.0 L687 272.0 L687 272.0 L688 272.0 L688 266.0 L689 266.0 L689 266.0 L690 266.0 L690 268.0 L691 268.0 L691 268.2 L692 268.2 L692 268.5 L693 268.5 L693 268.7 L694 268.7 L694 269.0 L695 269.0 L695 269.2 L696 269.2 L696 269.4 L697 269.4 L697 269.7 L698 269.7 L698 269.9 L699 269.9 L699 270.2 L700 270.2 L700 268.7 L701 268.7 L701 270.8 L702 270.8 L702 270.8 L703 270.8 L703 270.8 L704 270.8 L704 270.8 L705 270.8 L705 264.0 L706 264.0 L706 264.0 L707 264.0 L707 264.0 L708 264.0 L708 267.0 L709 267.0 L709 267.0 L710 267.0 L710 267.0 L711 267.0 L711 268.3 L712 268.3 L712 268.3 L713 268.3 L713 268.3 L714 268.3 L714 268.3 L715 268.3 L715 268.3 L716 268.3 L716 268.3 L717 268.3 L717 268.3 L718 268.3 L718 268.3 L719 268.3 L719 270.0 L720 270.0 L720 270.1 L721 270.1 L721 270.2 L722 270.2 L722 270.4 L723 270.4 L723 270.5 L724 270.5 L724 270.6 L725 270.6 L725 270.8 L726 270.8 L726 270.9 L727 270.9 L727 276Z" fill="#2fd598"/><path d="M306 291 L306 288.0 L307 288.0 L307 288.0 L308 288.0 L308 288.0 L309 288.0 L309 288.0 L310 288.0 L310 284.0 L311 284.0 L311 279.0 L312 279.0 L312 279.0 L313 279.0 L313 279.0 L314 279.0 L314 279.0 L315 279.0 L315 279.0 L316 279.0 L316 279.0 L317 279.0 L317 279.0 L318 279.0 L318 283.0 L319 283.0 L319 283.0 L320 283.0 L320 279.0 L321 279.0 L321 279.0 L322 279.0 L322 279.0 L323 279.0 L323 279.0 L324 279.0 L324 279.0 L325 279.0 L325 279.0 L326 279.0 L326 279.0 L327 279.0 L327 279.0 L328 279.0 L328 279.0 L329 279.0 L329 279.0 L330 279.0 L330 279.0 L331 279.0 L331 279.0 L332 279.0 L332 279.0 L333 279.0 L333 279.0 L334 279.0 L334 279.0 L335 279.0 L335 279.0 L336 279.0 L336 279.0 L337 279.0 L337 279.0 L338 279.0 L338 279.0 L339 279.0 L339 279.0 L340 279.0 L340 279.0 L341 279.0 L341 279.0 L342 279.0 L342 279.0 L343 279.0 L343 279.0 L344 279.0 L344 279.0 L345 279.0 L345 279.0 L346 279.0 L346 279.0 L347 279.0 L347 279.0 L348 279.0 L348 279.0 L349 279.0 L349 279.0 L350 279.0 L350 279.0 L351 279.0 L351 279.0 L352 279.0 L352 279.0 L353 279.0 L353 279.0 L354 279.0 L354 279.0 L355 279.0 L355 279.0 L356 279.0 L356 279.0 L357 279.0 L357 279.0 L358 279.0 L358 279.0 L359 279.0 L359 279.0 L360 279.0 L360 279.0 L361 279.0 L361 279.0 L362 279.0 L362 279.0 L363 279.0 L363 279.0 L364 279.0 L364 279.0 L365 279.0 L365 283.0 L366 283.0 L366 279.0 L367 279.0 L367 279.0 L368 279.0 L368 279.0 L369 279.0 L369 279.0 L370 279.0 L370 279.0 L371 279.0 L371 279.0 L372 279.0 L372 279.0 L373 279.0 L373 279.0 L374 279.0 L374 279.0 L375 279.0 L375 279.0 L376 279.0 L376 279.0 L377 279.0 L377 279.0 L378 279.0 L378 279.0 L379 279.0 L379 279.0 L380 279.0 L380 279.0 L381 279.0 L381 279.0 L382 279.0 L382 279.0 L383 279.0 L383 279.0 L384 279.0 L384 279.0 L385 279.0 L385 279.0 L386 279.0 L386 279.0 L387 279.0 L387 279.0 L388 279.0 L388 279.0 L389 279.0 L389 279.0 L390 279.0 L390 281.0 L391 281.0 L391 279.0 L392 279.0 L392 279.0 L393 279.0 L393 279.0 L394 279.0 L394 279.0 L395 279.0 L395 279.0 L396 279.0 L396 279.0 L397 279.0 L397 279.0 L398 279.0 L398 279.0 L399 279.0 L399 279.0 L400 279.0 L400 279.0 L401 279.0 L401 279.0 L402 279.0 L402 281.0 L403 281.0 L403 279.0 L404 279.0 L404 279.0 L405 279.0 L405 279.0 L406 279.0 L406 279.0 L407 279.0 L407 279.0 L408 279.0 L408 279.0 L409 279.0 L409 279.0 L410 279.0 L410 279.0 L411 279.0 L411 279.0 L412 279.0 L412 279.0 L413 279.0 L413 283.0 L414 283.0 L414 279.0 L415 279.0 L415 279.0 L416 279.0 L416 279.0 L417 279.0 L417 279.0 L418 279.0 L418 279.0 L419 279.0 L419 279.0 L420 279.0 L420 279.0 L421 279.0 L421 279.0 L422 279.0 L422 279.0 L423 279.0 L423 279.0 L424 279.0 L424 281.0 L425 281.0 L425 279.0 L426 279.0 L426 279.0 L427 279.0 L427 279.0 L428 279.0 L428 279.0 L429 279.0 L429 279.0 L430 279.0 L430 279.0 L431 279.0 L431 279.0 L432 279.0 L432 279.0 L433 279.0 L433 279.0 L434 279.0 L434 279.0 L435 279.0 L435 279.0 L436 279.0 L436 282.0 L437 282.0 L437 279.0 L438 279.0 L438 279.0 L439 279.0 L439 279.0 L440 279.0 L440 279.0 L441 279.0 L441 279.0 L442 279.0 L442 279.0 L443 279.0 L443 279.0 L444 279.0 L444 279.0 L445 279.0 L445 279.0 L446 279.0 L446 279.0 L447 279.0 L447 279.0 L448 279.0 L448 279.0 L449 279.0 L449 279.0 L450 279.0 L450 279.0 L451 279.0 L451 279.0 L452 279.0 L452 279.0 L453 279.0 L453 279.0 L454 279.0 L454 279.0 L455 279.0 L455 279.0 L456 279.0 L456 279.0 L457 279.0 L457 279.0 L458 279.0 L458 279.0 L459 279.0 L459 279.0 L460 279.0 L460 282.0 L461 282.0 L461 279.0 L462 279.0 L462 279.0 L463 279.0 L463 279.0 L464 279.0 L464 279.0 L465 279.0 L465 279.0 L466 279.0 L466 279.0 L467 279.0 L467 279.0 L468 279.0 L468 279.0 L469 279.0 L469 279.0 L470 279.0 L470 279.0 L471 279.0 L471 279.0 L472 279.0 L472 279.0 L473 279.0 L473 279.0 L474 279.0 L474 279.0 L475 279.0 L475 279.0 L476 279.0 L476 279.0 L477 279.0 L477 279.0 L478 279.0 L478 279.0 L479 279.0 L479 279.0 L480 279.0 L480 279.0 L481 279.0 L481 279.0 L482 279.0 L482 279.0 L483 279.0 L483 279.0 L484 279.0 L484 279.0 L485 279.0 L485 281.0 L486 281.0 L486 279.0 L487 279.0 L487 279.0 L488 279.0 L488 279.0 L489 279.0 L489 284.0 L490 284.0 L490 284.0 L491 284.0 L491 284.0 L492 284.0 L492 284.0 L493 284.0 L493 284.0 L494 284.0 L494 279.0 L495 279.0 L495 279.0 L496 279.0 L496 279.0 L497 279.0 L497 279.0 L498 279.0 L498 279.0 L499 279.0 L499 279.0 L500 279.0 L500 279.0 L501 279.0 L501 279.0 L502 279.0 L502 279.0 L503 279.0 L503 279.0 L504 279.0 L504 279.0 L505 279.0 L505 279.0 L506 279.0 L506 279.0 L507 279.0 L507 282.0 L508 282.0 L508 279.0 L509 279.0 L509 279.0 L510 279.0 L510 279.0 L511 279.0 L511 279.0 L512 279.0 L512 279.0 L513 279.0 L513 279.0 L514 279.0 L514 279.0 L515 279.0 L515 279.0 L516 279.0 L516 279.0 L517 279.0 L517 279.0 L518 279.0 L518 279.0 L519 279.0 L519 280.0 L520 280.0 L520 279.0 L521 279.0 L521 279.0 L522 279.0 L522 279.0 L523 279.0 L523 279.0 L524 279.0 L524 279.0 L525 279.0 L525 279.0 L526 279.0 L526 279.0 L527 279.0 L527 279.0 L528 279.0 L528 279.0 L529 279.0 L529 279.0 L530 279.0 L530 279.0 L531 279.0 L531 279.0 L532 279.0 L532 279.0 L533 279.0 L533 279.0 L534 279.0 L534 279.0 L535 279.0 L535 279.0 L536 279.0 L536 279.0 L537 279.0 L537 279.0 L538 279.0 L538 279.0 L539 279.0 L539 279.0 L540 279.0 L540 279.0 L541 279.0 L541 279.0 L542 279.0 L542 279.0 L543 279.0 L543 279.0 L544 279.0 L544 279.0 L545 279.0 L545 279.0 L546 279.0 L546 279.0 L547 279.0 L547 279.0 L548 279.0 L548 279.0 L549 279.0 L549 279.0 L550 279.0 L550 279.0 L551 279.0 L551 279.0 L552 279.0 L552 279.0 L553 279.0 L553 279.0 L554 279.0 L554 282.0 L555 282.0 L555 279.0 L556 279.0 L556 279.0 L557 279.0 L557 279.0 L558 279.0 L558 279.0 L559 279.0 L559 279.0 L560 279.0 L560 279.0 L561 279.0 L561 279.0 L562 279.0 L562 279.0 L563 279.0 L563 279.0 L564 279.0 L564 279.0 L565 279.0 L565 279.0 L566 279.0 L566 279.0 L567 279.0 L567 279.0 L568 279.0 L568 279.0 L569 279.0 L569 279.0 L570 279.0 L570 279.0 L571 279.0 L571 279.0 L572 279.0 L572 279.0 L573 279.0 L573 279.0 L574 279.0 L574 279.0 L575 279.0 L575 279.0 L576 279.0 L576 279.0 L577 279.0 L577 279.0 L578 279.0 L578 282.0 L579 282.0 L579 279.0 L580 279.0 L580 279.0 L581 279.0 L581 279.0 L582 279.0 L582 279.0 L583 279.0 L583 279.0 L584 279.0 L584 279.0 L585 279.0 L585 279.0 L586 279.0 L586 279.0 L587 279.0 L587 279.0 L588 279.0 L588 279.0 L589 279.0 L589 279.0 L590 279.0 L590 279.0 L591 279.0 L591 279.0 L592 279.0 L592 279.0 L593 279.0 L593 279.0 L594 279.0 L594 279.0 L595 279.0 L595 279.0 L596 279.0 L596 279.0 L597 279.0 L597 279.0 L598 279.0 L598 279.0 L599 279.0 L599 279.0 L600 279.0 L600 283.0 L601 283.0 L601 283.0 L602 283.0 L602 283.0 L603 283.0 L603 283.0 L604 283.0 L604 279.0 L605 279.0 L605 279.0 L606 279.0 L606 279.0 L607 279.0 L607 279.0 L608 279.0 L608 279.0 L609 279.0 L609 279.0 L610 279.0 L610 279.0 L611 279.0 L611 279.0 L612 279.0 L612 279.0 L613 279.0 L613 279.0 L614 279.0 L614 279.0 L615 279.0 L615 279.0 L616 279.0 L616 279.0 L617 279.0 L617 279.0 L618 279.0 L618 279.0 L619 279.0 L619 279.0 L620 279.0 L620 279.0 L621 279.0 L621 279.0 L622 279.0 L622 279.0 L623 279.0 L623 279.0 L624 279.0 L624 279.0 L625 279.0 L625 281.0 L626 281.0 L626 279.0 L627 279.0 L627 279.0 L628 279.0 L628 279.0 L629 279.0 L629 279.0 L630 279.0 L630 279.0 L631 279.0 L631 279.0 L632 279.0 L632 279.0 L633 279.0 L633 279.0 L634 279.0 L634 279.0 L635 279.0 L635 279.0 L636 279.0 L636 279.0 L637 279.0 L637 279.0 L638 279.0 L638 279.0 L639 279.0 L639 279.0 L640 279.0 L640 279.0 L641 279.0 L641 279.0 L642 279.0 L642 279.0 L643 279.0 L643 279.0 L644 279.0 L644 279.0 L645 279.0 L645 279.0 L646 279.0 L646 279.0 L647 279.0 L647 279.0 L648 279.0 L648 282.0 L649 282.0 L649 279.0 L650 279.0 L650 279.0 L651 279.0 L651 279.0 L652 279.0 L652 279.0 L653 279.0 L653 279.0 L654 279.0 L654 279.0 L655 279.0 L655 279.0 L656 279.0 L656 279.0 L657 279.0 L657 279.0 L658 279.0 L658 279.0 L659 279.0 L659 279.0 L660 279.0 L660 279.0 L661 279.0 L661 279.0 L662 279.0 L662 279.0 L663 279.0 L663 279.0 L664 279.0 L664 279.0 L665 279.0 L665 279.0 L666 279.0 L666 279.0 L667 279.0 L667 279.0 L668 279.0 L668 279.0 L669 279.0 L669 279.0 L670 279.0 L670 279.0 L671 279.0 L671 279.0 L672 279.0 L672 279.0 L673 279.0 L673 282.0 L674 282.0 L674 279.0 L675 279.0 L675 279.0 L676 279.0 L676 279.0 L677 279.0 L677 279.0 L678 279.0 L678 286.0 L679 286.0 L679 286.0 L680 286.0 L680 286.8 L681 286.8 L681 286.8 L682 286.8 L682 286.8 L683 286.8 L683 286.8 L684 286.8 L684 286.8 L685 286.8 L685 286.8 L686 286.8 L686 286.8 L687 286.8 L687 286.8 L688 286.8 L688 279.0 L689 279.0 L689 279.5 L690 279.5 L690 281.5 L691 281.5 L691 281.9 L692 281.9 L692 282.3 L693 282.3 L693 282.7 L694 282.7 L694 283.1 L695 283.1 L695 283.6 L696 283.6 L696 284.0 L697 284.0 L697 284.4 L698 284.4 L698 284.8 L699 284.8 L699 285.2 L700 285.2 L700 286.4 L701 286.4 L701 286.4 L702 286.4 L702 286.4 L703 286.4 L703 286.4 L704 286.4 L704 286.4 L705 286.4 L705 281.0 L706 281.0 L706 281.0 L707 281.0 L707 282.3 L708 282.3 L708 282.3 L709 282.3 L709 282.3 L710 282.3 L710 282.3 L711 282.3 L711 284.2 L712 284.2 L712 284.2 L713 284.2 L713 284.2 L714 284.2 L714 284.2 L715 284.2 L715 284.2 L716 284.2 L716 284.2 L717 284.2 L717 284.2 L718 284.2 L718 286.0 L719 286.0 L719 286.0 L720 286.0 L720 286.0 L721 286.0 L721 286.0 L722 286.0 L722 286.0 L723 286.0 L723 286.0 L724 286.0 L724 286.0 L725 286.0 L725 286.0 L726 286.0 L726 286.0 L727 286.0 L727 291Z" fill="#2fd598"/></svg>
<svg style="left:318px;top:263px" width="15" height="14" viewBox="0 0 15 14">
<rect x="0.5" y="0.5" width="14" height="13" fill="#f2c200" stroke="#b8b098" stroke-width="1"/>
<path d="M9.4 3.0Q7.4 2.4 6.7 4.4L4.3 12.4" stroke="#111" stroke-width="1.1" fill="none"/>
<path d="M5.0 5.8H7.4" stroke="#111" stroke-width="0.8"/>
<path d="M7.9 6.4L11.3 10.9M11.5 6.4L7.7 10.9" stroke="#111" stroke-width="1.0"/>
</svg>
</body></html>
